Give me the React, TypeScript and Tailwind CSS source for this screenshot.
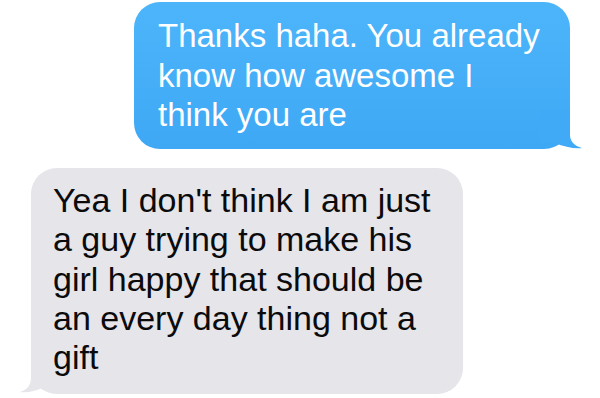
export default function App() {
  const font = { fontFamily: '"Liberation Sans", Arial, Helvetica, sans-serif' };
  return (
    <div className="w-[600px] h-[398px] bg-white overflow-hidden relative" style={font}>
      <div className="pt-[2px] pl-[134px]">
        <div className="relative w-[436px] h-[147px] rounded-[26px] bg-gradient-to-b from-[#4cb5fa] to-[#3fa8f5] pl-[24px] pt-[14px] text-white text-[33px] leading-[39.5px] whitespace-nowrap">
          <div>Thanks haha. You already</div>
          <div>know how awesome I</div>
          <div>think you are</div>
          <svg className="absolute left-[406px] top-[108px]" width="45" height="42" viewBox="0 0 45 42">
            <path d="M0 0 L30 0 L30 25 C30 31 34 36 42 38 C35 39 24 37 15 33 L0 33 Z" fill="#41aaf6" />
          </svg>
        </div>
      </div>
      <div className="pt-[19px] pl-[31px]">
        <div className="relative w-[432px] h-[226px] rounded-[26px] bg-[#e5e5ea] pl-[22px] pt-[13px] text-[#0b0b0b] text-[34px] leading-[39.25px] whitespace-nowrap">
          <div>Yea I don't think I am just</div>
          <div>a guy trying to make his</div>
          <div>girl happy that should be</div>
          <div>an every day thing not a</div>
          <div>gift</div>
          <svg className="absolute left-[-13px] top-[192px]" width="30" height="36" viewBox="0 0 30 36">
            <path d="M13 0 L13 18 C13 25 9 30 2 32 C9 33 18 31 24 28 L30 28 L30 0 Z" fill="#e5e5ea" />
          </svg>
        </div>
      </div>
    </div>
  );
}
